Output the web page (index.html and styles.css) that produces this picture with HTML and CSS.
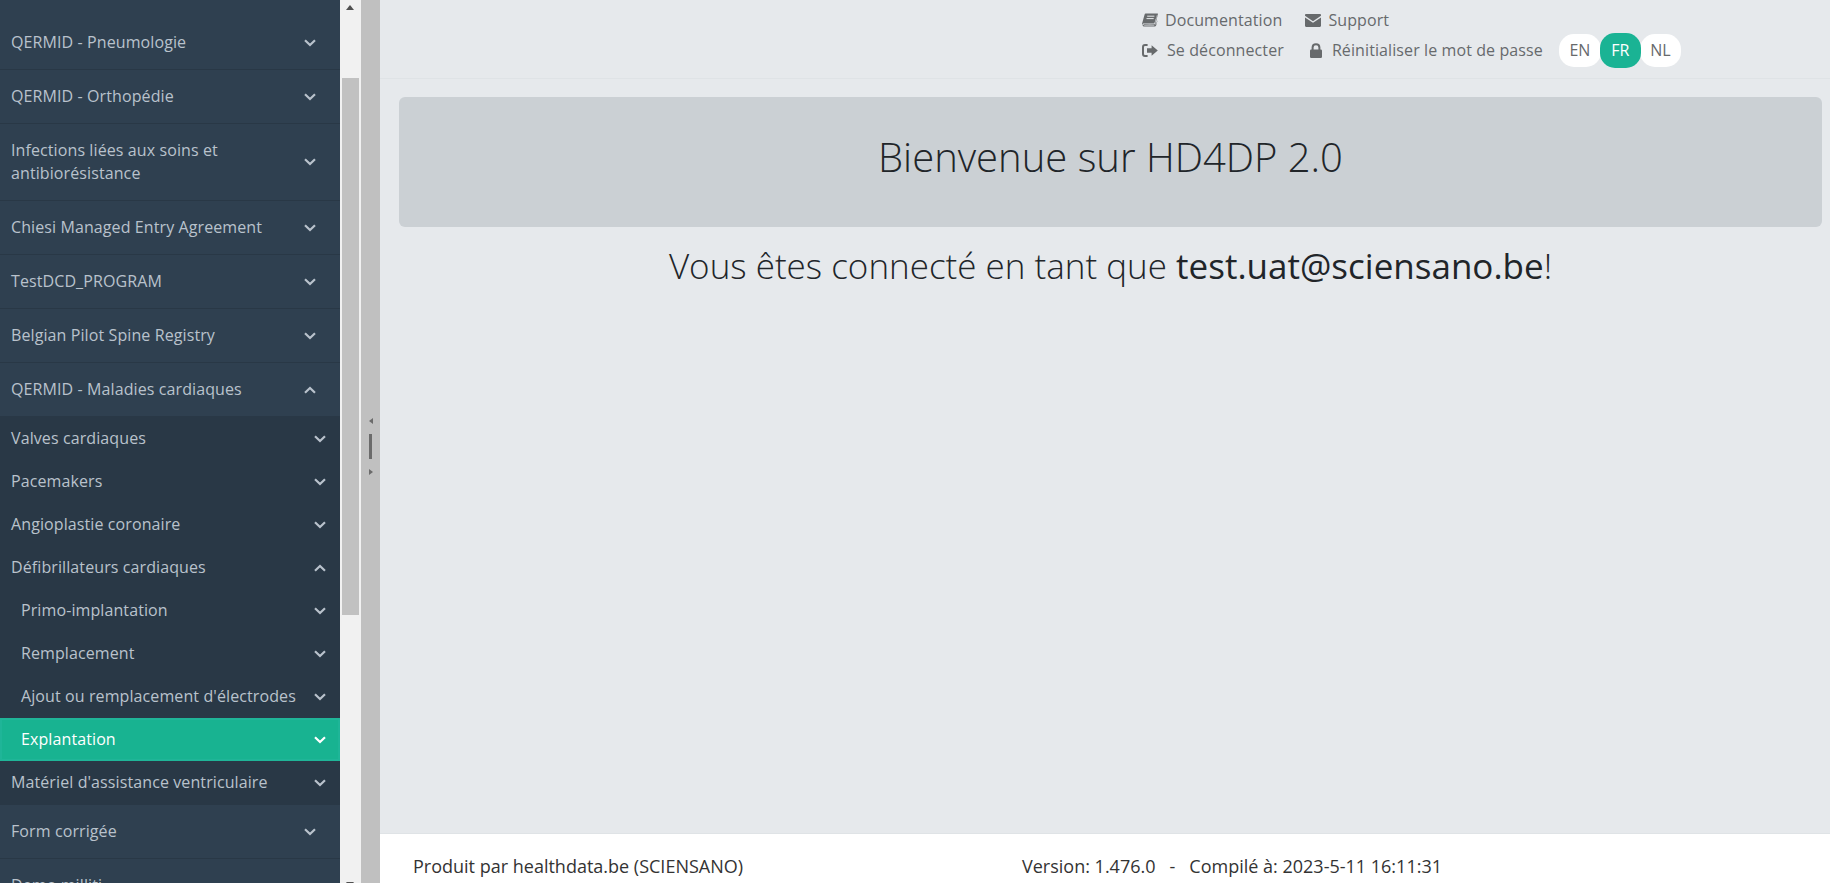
FILE: index.html
```html
<!DOCTYPE html>
<html lang="fr">
<head>
    <meta charset="UTF-8">
    <title>HD4DP 2.0</title>
    <link rel="stylesheet" href="styles.css">
</head>
<body>
    <svg class="defs" width="0" height="0">
        <symbol id="down" viewBox="0 0 12 8"><polyline points="1,1.2 6,6 11,1.2"/></symbol>
        <symbol id="up" viewBox="0 0 12 8"><polyline points="1,6.8 6,2 11,6.8"/></symbol>
    </svg>

    <!--menu-->
    <nav class="sidebar">
        <ul class="menu">
            <li class="item"><span>QERMID - Pneumologie</span><svg class="chev"><use href="#down"/></svg></li>
            <li class="item"><span>QERMID - Orthopédie</span><svg class="chev"><use href="#down"/></svg></li>
            <li class="item"><span>Infections liées aux soins et<br>antibiorésistance</span><svg class="chev"><use href="#down"/></svg></li>
            <li class="item"><span>Chiesi Managed Entry Agreement</span><svg class="chev"><use href="#down"/></svg></li>
            <li class="item"><span>TestDCD_PROGRAM</span><svg class="chev"><use href="#down"/></svg></li>
            <li class="item"><span>Belgian Pilot Spine Registry</span><svg class="chev"><use href="#down"/></svg></li>
            <li class="item open"><span>QERMID - Maladies cardiaques</span><svg class="chev"><use href="#up"/></svg></li>
            <li class="group">
                <ul class="menu">
                    <li class="sub"><span>Valves cardiaques</span><svg class="chev"><use href="#down"/></svg></li>
                    <li class="sub"><span>Pacemakers</span><svg class="chev"><use href="#down"/></svg></li>
                    <li class="sub"><span>Angioplastie coronaire</span><svg class="chev"><use href="#down"/></svg></li>
                    <li class="sub"><span>Défibrillateurs cardiaques</span><svg class="chev"><use href="#up"/></svg></li>
                    <li class="sub third"><span>Primo-implantation</span><svg class="chev"><use href="#down"/></svg></li>
                    <li class="sub third"><span>Remplacement</span><svg class="chev"><use href="#down"/></svg></li>
                    <li class="sub third"><span>Ajout ou remplacement d'électrodes</span><svg class="chev"><use href="#down"/></svg></li>
                    <li class="sub third active"><span>Explantation</span><svg class="chev"><use href="#down"/></svg></li>
                    <li class="sub"><span>Matériel d'assistance ventriculaire</span><svg class="chev"><use href="#down"/></svg></li>
                </ul>
            </li>
            <li class="item"><span>Form corrigée</span><svg class="chev"><use href="#down"/></svg></li>
            <li class="item"><span>Demo milliti</span></li>
        </ul>
    </nav>

    <!--scrollbar du menu-->
    <div class="scroll-bar">
        <i class="scroll-up"></i>
        <div class="scroll-thumb"></div>
        <i class="scroll-down"></i>
    </div>

    <!--separateur-->
    <div class="splitter">
        <i class="arrow-left"></i>
        <b class="grip"></b>
        <i class="arrow-right"></i>
    </div>

    <div class="main">
        <header class="topbar">
            <div class="links">
                <div class="link-row">
                    <a class="link">
                        <svg class="ico" width="16" height="14" viewBox="0 0 16 14"><path d="M3.6 0.5H15.4C15.9 0.5 16 0.9 15.9 1.3L13.4 11.2C13.2 12 12.8 12.4 12 12.4H2.6C1.6 12.4 1.3 11.9 1.6 11.3H12C12.5 11.3 12.8 11 13 10.4L15.2 2.2 15 2 12.4 10.2C12.3 10.5 12 10.6 11.7 10.6H1.4C1 10.6 0.6 11.3 0.6 11.9 0.6 13 1.4 13.6 2.6 13.6H12.2C13.2 13.6 14 13 14.3 12L15.4 8 15.2 7.6C14.6 9.8 14 11.6 14 11.6L0.5 12C0 11.4 0 10.6 0.3 9.7L2.6 1.4C2.8 0.8 3.1 0.5 3.6 0.5Z"/><path d="M5.2 3.2H12.4M4.5 5.6H11.7" class="ico-line"/></svg>
                        Documentation
                    </a>
                    <a class="link support">
                        <svg class="ico" width="16" height="13" viewBox="0 0 16 13"><path d="M1.2 0H14.8C15.5 0 16 0.5 16 1.2V1.8L8 7.2 0 1.8V1.2C0 0.5 0.5 0 1.2 0Z"/><path d="M0 3.4L8 8.8 16 3.4V11.8C16 12.5 15.5 13 14.8 13H1.2C0.5 13 0 12.5 0 11.8Z"/></svg>
                        Support
                    </a>
                </div>
                <div class="link-row">
                    <a class="link logout">
                        <svg class="ico" width="16" height="13" viewBox="0 0 16 13"><path d="M5.6 1H3C1.8 1 1 1.8 1 3V10C1 11.2 1.8 12 3 12H5.6" class="ico-stroke"/><path d="M9.6 1.2L15.8 6.5 9.6 11.8V8.7H5V4.3H9.6Z"/></svg>
                        Se déconnecter
                    </a>
                    <a class="link reset">
                        <svg class="ico" width="14" height="15" viewBox="0 0 14 15"><path d="M3.6 7V4.6C3.6 2.6 5 1.2 7 1.2S10.4 2.6 10.4 4.6V7" class="ico-stroke"/><rect x="1" y="6.4" width="12" height="8.6" rx="1.2"/></svg>
                        Réinitialiser le mot de passe
                    </a>
                </div>
            </div>
            <div class="langs">
                <a class="lang">EN</a>
                <a class="lang on">FR</a>
                <a class="lang">NL</a>
            </div>
        </header>

        <div class="content">
            <div class="jumbo">
                <h1 class="jumbo-title">Bienvenue sur HD4DP 2.0</h1>
            </div>
            <h2 class="welcome">Vous êtes connecté en tant que <strong>test.uat@sciensano.be</strong>!</h2>
        </div>

        <footer class="footer">
            <div class="made-by">Produit par healthdata.be (SCIENSANO)</div>
            <div class="build">Version: 1.476.0 &nbsp;&nbsp;-&nbsp;&nbsp; Compilé à: 2023-5-11 16:11:31</div>
        </footer>
    </div>
</body>
</html>
```

FILE: styles.css
```css
html, body{
    height:100%;
}
body{
    margin:0;
    display:flex;
    overflow:hidden;
    background:#e6e9ec;
    font-family:"Open Sans", "Liberation Sans", sans-serif;
    font-size:16px;
    color:#676a6c;
}
.defs{
    position:absolute;
}
ul{
    list-style:none;
    margin:0;
    padding:0;
}

/* menu */
.sidebar{
    width:340px;
    flex:none;
    overflow:hidden;
    background:#2f4050;
    color:#b9c2cc;
    line-height:23px;
    letter-spacing:.1px;
}
.sidebar > .menu{
    padding-top:16px;
}
.item{
    display:flex;
    justify-content:space-between;
    align-items:center;
    padding:15px 24px 15px 11px;
    border-bottom:1px solid #293846;
}
.item.open{
    border-bottom:0;
}
.group{
    background:#293846;
    padding-top:1px;
    border-bottom:1px solid #293846;
}
.sub{
    display:flex;
    justify-content:space-between;
    align-items:center;
    padding:10px 14px 10px 11px;
}
.sub.third{
    padding-left:21px;
}
.sub.active{
    background:#18b391;
    color:white;
    box-shadow:inset 0 0 0 2px #1fb598;
}
.chev{
    width:12px;
    height:8px;
    flex:none;
    fill:none;
    stroke:currentColor;
    stroke-width:2.2;
}

/* scrollbar */
.scroll-bar{
    width:17px;
    flex:none;
    padding:0 2px;
    background:#f1f1f1;
    position:relative;
}
.scroll-thumb{
    height:537px;
    margin-top:78px;
    background:#c1c1c1;
}
.scroll-up, .scroll-down{
    position:absolute;
    left:6px;
    border-left:4.5px solid transparent;
    border-right:4.5px solid transparent;
}
.scroll-up{
    top:5px;
    border-bottom:5px solid #505050;
}
.scroll-down{
    top:882px;
    border-top:5px solid #505050;
}

/* separateur */
.splitter{
    width:19px;
    flex:none;
    display:flex;
    flex-direction:column;
    align-items:center;
    justify-content:center;
    padding-top:9px;
    box-sizing:border-box;
    background:#c0c0c0;
}
.grip{
    width:3px;
    height:25px;
    margin:10px 0;
    background:#6b6b6b;
}
.arrow-left, .arrow-right{
    border-top:3.5px solid transparent;
    border-bottom:3.5px solid transparent;
}
.arrow-left{
    border-right:4px solid #6b6b6b;
}
.arrow-right{
    border-left:4px solid #6b6b6b;
}

.main{
    flex:1;
    min-width:0;
    display:flex;
    flex-direction:column;
}

/* barre du haut */
.topbar{
    height:79px;
    box-sizing:border-box;
    flex:none;
    display:flex;
    align-items:flex-start;
    padding:5px 0 0 762px;
    border-bottom:1px solid #dfe3e6;
}
.link-row{
    display:flex;
    height:30px;
    align-items:center;
    letter-spacing:.1px;
}
.link{
    display:flex;
    align-items:center;
    gap:7px;
}
.support{
    margin-left:23px;
}
.logout{
    gap:9px;
}
.reset{
    margin-left:25px;
    gap:9px;
}
.ico{
    fill:#676a6c;
    flex:none;
}
.ico-line{
    fill:none;
    stroke:#e6e9ec;
    stroke-width:1;
}
.ico-stroke{
    fill:none;
    stroke:#676a6c;
    stroke-width:2;
}
.langs{
    display:flex;
    align-items:center;
    height:35px;
    margin:28px 0 0 16px;
}
.lang{
    width:42px;
    height:33px;
    line-height:33px;
    text-align:center;
    background:white;
    border-radius:15px;
}
.lang.on{
    width:41px;
    height:35px;
    line-height:35px;
    margin:0 -1px;
    position:relative;
    background:#1ab394;
    color:white;
}
.lang:last-child{
    width:41px;
}

/* contenu */
.content{
    flex:1;
    padding:18px 8px 0 19px;
    color:#212529;
}
.jumbo{
    height:130px;
    box-sizing:border-box;
    padding-top:32px;
    background:#cbd0d4;
    border-radius:6px;
    text-align:center;
}
.jumbo-title{
    margin:0;
    font-size:40px;
    font-weight:300;
    line-height:56px;
}
.welcome{
    margin:14px 0 0;
    font-size:35px;
    font-weight:300;
    line-height:50px;
    text-align:center;
}
.welcome strong{
    font-weight:400;
}

.footer{
    height:50px;
    flex:none;
    box-sizing:border-box;
    display:flex;
    padding:21px 0 0 33px;
    font-size:18px;
    line-height:23px;
    background:white;
    border-top:1px solid #dfe3e6;
    color:#333;
}
.made-by{
    width:609px;
    flex:none;
}
```
